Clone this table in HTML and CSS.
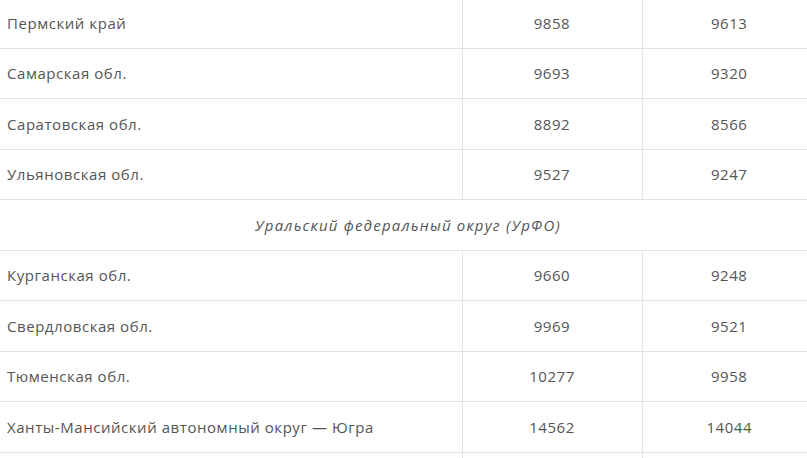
FILE: index.html
```html
<!DOCTYPE html>
<html lang="ru">
<head>
<meta charset="utf-8">
<link rel="stylesheet" href="styles.css">
</head>
<body>
<div class="wrap">
<table class="tbl">
<colgroup><col class="c1"><col class="c2"><col class="c3"></colgroup>
<tbody>
<tr><td class="name">Пермский край</td><td class="num">9858</td><td class="num">9613</td></tr>
<tr><td class="name">Самарская обл.</td><td class="num">9693</td><td class="num">9320</td></tr>
<tr><td class="name">Саратовская обл.</td><td class="num">8892</td><td class="num">8566</td></tr>
<tr><td class="name">Ульяновская обл.</td><td class="num">9527</td><td class="num">9247</td></tr>
<tr><td class="section" colspan="3">Уральский федеральный округ (УрФО)</td></tr>
<tr><td class="name">Курганская обл.</td><td class="num">9660</td><td class="num">9248</td></tr>
<tr><td class="name">Свердловская обл.</td><td class="num">9969</td><td class="num">9521</td></tr>
<tr><td class="name">Тюменская обл.</td><td class="num">10277</td><td class="num">9958</td></tr>
<tr><td class="name">Ханты-Мансийский автономный округ — Югра</td><td class="num">14562</td><td class="num">14044</td></tr>
<tr><td class="name">&nbsp;</td><td class="num">&nbsp;</td><td class="num">&nbsp;</td></tr>
</tbody>
</table>
</div>
</body>
</html>
```
FILE: styles.css
```css
html, body {
  margin: 0;
  padding: 0;
  background: #fff;
  overflow: hidden;
}
.wrap {
  width: 807px;
  height: 458px;
  overflow: hidden;
}
.tbl {
  width: 816px;
  margin-top: -2.5px;
  border-collapse: collapse;
  table-layout: fixed;
  font-family: "Open Sans", "Noto Sans", sans-serif;
  font-size: 15px;
  letter-spacing: 0.55px;
  color: #555;
}
.c1 { width: 462px; }
.c2 { width: 180px; }
.c3 { width: 174px; }
.tbl td {
  height: 50.5px;
  padding: 0 7px;
  box-sizing: border-box;
  border-bottom: 1px solid #e3e3ea;
  vertical-align: middle;
}
.tbl td + td {
  border-left: 1px solid #e3e3ea;
}
.num {
  text-align: center;
}
.section {
  text-align: center;
  font-style: italic;
  letter-spacing: 1.2px;
  padding-right: 16px;
}
```
